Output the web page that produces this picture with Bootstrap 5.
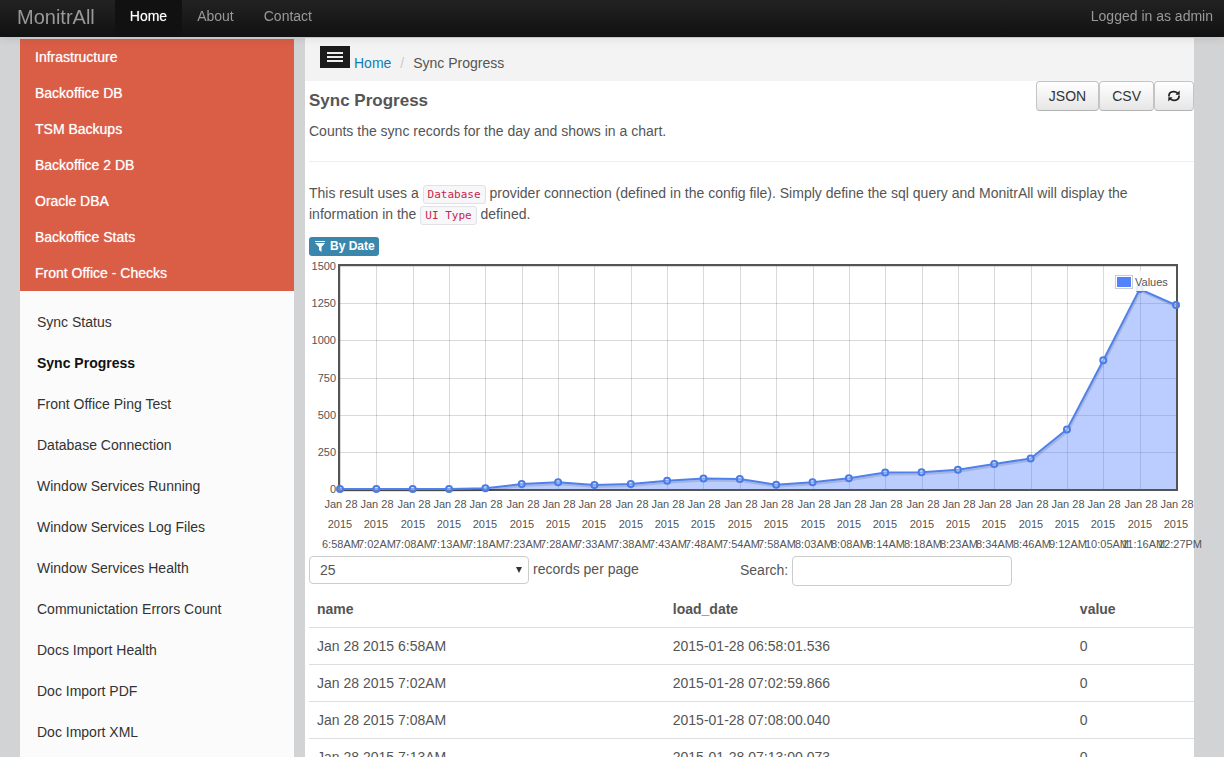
<!DOCTYPE html>
<html lang="en">
<head>
<meta charset="utf-8">
<meta name="viewport" content="width=device-width, initial-scale=1">
<title>MonitrAll - Sync Progress</title>
<link href="https://cdn.jsdelivr.net/npm/bootstrap@5.3.0/dist/css/bootstrap.min.css" rel="stylesheet">
<style>
  body { font: 14px/21px "Liberation Sans", Arial, sans-serif; color: #555; background: #d2d3d5; overflow-x: hidden; }
  .topbar { height: 37px; padding: 0 11px 0 17px; background: linear-gradient(#222, #111); box-shadow: 0 1px 10px rgba(0,0,0,.1); --bs-navbar-padding-y: 0; }
  .topbar .navbar-brand { font-size: 20px; line-height: 32px; color: #999; margin: 0 20px 4px 0; padding: 0; }
  .topbar .navbar-nav .nav-link { color: #999; padding: 0 15px 4px; line-height: 33px; }
  .topbar .navbar-nav .nav-link.active { color: #fff; background: #111; text-shadow: 0 0 1px rgba(255,255,255,.6); }
  .topbar .navbar-text { color: #999; padding: 0 0 4px; line-height: 33px; }
  .page { padding: 38px 30px 0 20px; gap: 11px; min-height: 100vh; }
  .sidebar { flex: 0 0 274px; background: #fbfbfb; margin-top: 1px; }
  .groups { background: #da5d46; }
  .groups a { display: block; padding: 0 15px; line-height: 36px; color: #fff; text-decoration: none; text-shadow: 0 0 1px rgba(255,255,255,.7); }
  .checks { padding-top: 11px; }
  .checks a { display: block; padding: 0 17px; line-height: 41px; color: #333; text-decoration: none; }
  .checks a.active { font-weight: 700; color: #111; }
  .main-pane { background: #fff; min-width: 0; }
  .crumbs { background: #f3f3f3; height: 43px; padding: 8px 15px 0; gap: 4px; }
  .crumbs .breadcrumb { padding-top: 7px; --bs-breadcrumb-item-padding-x: 9px; --bs-breadcrumb-divider-color: #ccc; --bs-breadcrumb-item-active-color: #555; }
  .crumbs a { color: #0d7fb8; text-decoration: none; }
  .menu-btn { width: 30px; height: 22px; background: #1b1b1b; border: 0; }
  .content { padding-left: 4px; }
  h1 { font-size: 17px; line-height: 20px; font-weight: 700; margin: 10px 0; }
  .tool-btn { height: 30px; padding: 0 12px; font-size: 14px; color: #333; border: 1px solid #c4c4c4; border-bottom-color: #b3b3b3; border-radius: 4px; background: linear-gradient(#fff, #e6e6e6); }
  .rule { border-top: 1px solid #eee; margin: 19px 0 21px; opacity: 1; }
  .intro { margin: 0 44px 12px 0; }
  .intro code { font: 11px/14px "DejaVu Sans Mono", monospace; color: #c7254e; background: #f7f7f9; border: 1px solid #e1e1e8; border-radius: 3px; padding: 2px 4px; }
  .filter-tag { font-size: 12px; line-height: 18px; height: 19px; padding: 0 4px 1px 6px; gap: 5px; background: #3a87ad; border-radius: 3px; }
  .chart { height: 300px; }
  .chart svg { display: block; width: 100%; height: 100%; overflow: visible; font-size: 11px; fill: #555; }
  .entries { width: 431px; }
  .records { width: 220px; height: 28px; }
  .search { width: 220px; height: 30px; }
  .field { border: 1px solid #ccc; border-radius: 4px; font-size: 14px; line-height: 20px; color: #555; padding: 0 10px; background-color: #fff; }
  .records.field { background-size: 8px 6px; background-position: right 5px center; background-image: url("data:image/svg+xml,%3csvg xmlns='http://www.w3.org/2000/svg' viewBox='0 0 8 6'%3e%3cpath fill='%23333' d='M1 0h6L4 6z'/%3e%3c/svg%3e"); }
  .entries label, .lookup label { padding-bottom: 2px; }
  .results { --bs-table-color: #555; --bs-table-bg: transparent; border-color: #ddd; margin: 5px 0 0; table-layout: fixed; }
  .results > thead > tr > th, .results > tbody > tr > td { padding: 8px; line-height: 20px; }
  .results .c-name { width: 40.2%; }
  .results .c-date { width: 46%; }
</style>
</head>
<body>
<nav class="navbar navbar-expand topbar fixed-top">
  <a class="navbar-brand" href="#">MonitrAll</a>
  <div class="navbar-nav me-auto">
    <a class="nav-link active" href="#">Home</a>
    <a class="nav-link" href="#">About</a>
    <a class="nav-link" href="#">Contact</a>
  </div>
  <span class="navbar-text">Logged in as admin</span>
</nav>

<div class="page d-flex">
  <aside class="sidebar">
    <nav class="groups">
      <a href="#">Infrastructure</a>
      <a href="#">Backoffice DB</a>
      <a href="#">TSM Backups</a>
      <a href="#">Backoffice 2 DB</a>
      <a href="#">Oracle DBA</a>
      <a href="#">Backoffice Stats</a>
      <a href="#">Front Office - Checks</a>
    </nav>
    <nav class="checks">
      <a href="#">Sync Status</a>
      <a href="#" class="active">Sync Progress</a>
      <a href="#">Front Office Ping Test</a>
      <a href="#">Database Connection</a>
      <a href="#">Window Services Running</a>
      <a href="#">Window Services Log Files</a>
      <a href="#">Window Services Health</a>
      <a href="#">Communictation Errors Count</a>
      <a href="#">Docs Import Health</a>
      <a href="#">Doc Import PDF</a>
      <a href="#">Doc Import XML</a>
    </nav>
  </aside>

  <main class="main-pane flex-grow-1">
    <div class="crumbs d-flex align-items-start">
      <button type="button" class="menu-btn d-flex align-items-center justify-content-center p-0" aria-label="Toggle menu">
        <svg width="16" height="12" viewBox="0 0 16 12" fill="#eee"><path d="M0 1h16v2H0zM0 5h16v2H0zM0 9h16v2H0z"/></svg>
      </button>
      <ol class="breadcrumb mb-0">
        <li class="breadcrumb-item"><a href="#">Home</a></li>
        <li class="breadcrumb-item active">Sync Progress</li>
      </ol>
    </div>

    <div class="content">
      <div class="d-flex justify-content-between align-items-start">
        <div>
          <h1>Sync Progress</h1>
          <p class="mb-0">Counts the sync records for the day and shows in a chart.</p>
        </div>
        <div class="d-flex">
          <button type="button" class="tool-btn">JSON</button>
          <button type="button" class="tool-btn">CSV</button>
          <button type="button" class="tool-btn d-flex align-items-center" aria-label="Refresh">
            <svg width="14" height="14" viewBox="0 0 14 14"><path d="M2 7.500V6.500Q2.200 3 6.500 2.700Q9 2.600 10.500 4.200M12 6.500V7.500Q11.800 11 7.500 11.300Q5 11.400 3.500 9.800" fill="none" stroke="#222" stroke-width="1.800"/><path d="M12.700 1.500v4.300H8.400zM1.300 12.500V8.200h4.300z" fill="#222"/></svg>
          </button>
        </div>
      </div>
      <hr class="rule">
      <p class="intro">This result uses a <code>Database</code> provider connection (defined in the config file). Simply define the sql query and MonitrAll will display the information in the <code>UI Type</code> defined.</p>
      <div class="d-flex">
        <span class="badge filter-tag d-flex align-items-center">
          <svg width="10" height="12" viewBox="0 0 10 12" fill="#fff"><path d="M0 1h10v1H0zM0 3h10L6.500 7v5L4 10V7z"/></svg>By Date
        </span>
      </div>
      <div class="chart" id="chart"></div>

      <div class="d-flex flex-wrap align-items-start">
        <div class="entries d-flex align-items-center gap-1">
          <select id="records" class="form-select field records"><option>10</option><option selected>25</option><option>50</option><option>100</option></select>
          <label for="records">records per page</label>
        </div>
        <div class="lookup d-flex align-items-center gap-1">
          <label for="search">Search:</label>
          <input id="search" type="text" class="form-control field search">
        </div>
      </div>

      <table class="table results">
        <thead><tr><th class="c-name">name</th><th class="c-date">load_date</th><th>value</th></tr></thead>
        <tbody>
          <tr><td>Jan 28 2015 6:58AM</td><td>2015-01-28 06:58:01.536</td><td>0</td></tr>
          <tr><td>Jan 28 2015 7:02AM</td><td>2015-01-28 07:02:59.866</td><td>0</td></tr>
          <tr><td>Jan 28 2015 7:08AM</td><td>2015-01-28 07:08:00.040</td><td>0</td></tr>
          <tr><td>Jan 28 2015 7:13AM</td><td>2015-01-28 07:13:00.073</td><td>0</td></tr>
        </tbody>
      </table>
    </div>
  </main>
</div>

<script src="https://cdn.jsdelivr.net/npm/bootstrap@5.3.0/dist/js/bootstrap.bundle.min.js"></script>
<script>
  const series = [
    ["6:58AM", 0], ["7:02AM", 0], ["7:08AM", 0], ["7:13AM", 0], ["7:18AM", 5], ["7:23AM", 33],
    ["7:28AM", 45], ["7:33AM", 27], ["7:38AM", 33], ["7:43AM", 55], ["7:48AM", 71], ["7:54AM", 68],
    ["7:58AM", 28], ["8:03AM", 45], ["8:08AM", 72], ["8:14AM", 111], ["8:18AM", 112], ["8:23AM", 130],
    ["8:34AM", 169], ["8:46AM", 205], ["9:12AM", 401], ["10:05AM", 866], ["11:16AM", 1345], ["12:27PM", 1237]
  ];
  const chart = document.getElementById("chart");

  function draw() {
    const left = 31, top = 10, plotH = 223, max = 1500;
    const right = chart.clientWidth - 18, bottom = top + plotH;
    const x = i => left + i * (right - left) / (series.length - 1);
    const y = v => bottom - v / max * plotH;
    const pts = series.map((d, i) => x(i).toFixed(1) + "," + y(d[1]).toFixed(1)).join(" ");
    let grid = "", labels = "", dots = "";
    for (let v = 0; v <= max; v += 250) {
      grid += `<path d="M${left} ${Math.round(y(v)) + .5}H${right}"/>`;
      labels += `<text x="${left - 4}" y="${Math.round(y(v)) + 4}" text-anchor="end">${v}</text>`;
    }
    series.forEach((d, i) => {
      const cx = Math.round(x(i));
      grid += `<path d="M${cx + .5} ${top}V${bottom}"/>`;
      labels += `<text x="${cx + 1}" y="${bottom + 19}" text-anchor="middle">Jan 28</text>` +
                `<text x="${cx}" y="${bottom + 39}" text-anchor="middle">2015</text>` +
                `<text x="${cx - 18}" y="${bottom + 59}">${d[0]}</text>`;
      dots += `<circle cx="${x(i)}" cy="${y(d[1])}" r="3"/>`;
    });
    chart.innerHTML = `<svg role="img" aria-label="Sync records by date">
      <g stroke="#545454" stroke-opacity=".22">${grid}</g>
      <rect x="${left - 1}" y="${top - 1}" width="${right - left + 2}" height="${plotH + 2}" fill="none" stroke="#545454" stroke-width="2"/>
      <polygon points="${left},${bottom} ${pts} ${right},${bottom}" fill="#5482ff" fill-opacity=".4"/>
      <polyline points="${pts}" transform="translate(1 2)" fill="none" stroke="#000" stroke-opacity=".12" stroke-width="2"/>
      <polyline points="${pts}" fill="none" stroke="#5080ea" stroke-width="2"/>
      <g fill="#fff" fill-opacity=".3" stroke="#4a7be6" stroke-width="2">${dots}</g>
      <rect x="${right - 63}" y="${top + 5}" width="58" height="20" fill="#fff" fill-opacity=".85"/>
      <rect x="${right - 60.5}" y="${top + 9.5}" width="17" height="13" fill="#fff" stroke="#ccc"/>
      <rect x="${right - 59}" y="${top + 11}" width="14" height="10" fill="#5482ff"/>
      <text x="${right - 41}" y="${top + 20}">Values</text>
      ${labels}</svg>`;
  }
  draw();
  addEventListener("resize", draw);
</script>
</body>
</html>
